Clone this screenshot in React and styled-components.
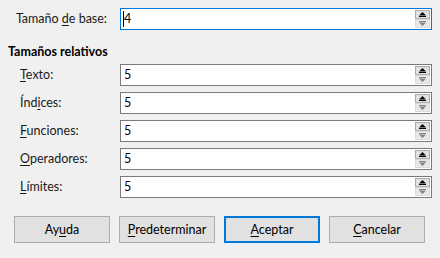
import React from "react";
import styled, { createGlobalStyle } from "styled-components";

const Global = createGlobalStyle`
  html, body { margin: 0; padding: 0; background: #f0f0f0; }
  body { font-family: Lato, "Noto Sans", sans-serif; font-size: 12.5px; color: #000; }
  u { text-decoration: underline; text-underline-offset: 2px; }
`;

const Dialog = styled.div`
  width: 440px;
  height: 258px;
  box-sizing: border-box;
  padding: 8px 8px 0 8px;
  display: flex;
  flex-direction: column;
`;

const Row = styled.div`
  display: grid;
  grid-template-columns: 112px 312px;
  align-items: center;
  height: 22px;
`;

const Label = styled.label`
  text-align: ${(p) => (p.$right ? "right" : "left")};
  padding-right: ${(p) => (p.$right ? 13 : 0)}px;
  padding-left: ${(p) => (p.$right ? 0 : 12)}px;
  white-space: nowrap;
  line-height: 16px;
  color: #1a1a1a;
`;

const Heading = styled.div`
  font-weight: bold;
  line-height: 16px;
  margin-top: 14px;
  margin-bottom: 4px;
`;

const Field = styled.div`
  box-sizing: border-box;
  height: 22px;
  background: #fff;
  border: 1px solid ${(p) => (p.$focus ? "#0078d7" : "#7a7a7a")};
  display: flex;
  align-items: center;
  padding: 1px 1px 1px 3px;
`;

const Value = styled.span`
  flex: 1;
  line-height: 16px;
  position: relative;
`;

const Caret = styled.span`
  position: absolute;
  left: -1px;
  top: 0;
  width: 1px;
  height: 16px;
  background: #000;
`;

const Spin = styled.div`
  display: flex;
  flex-direction: column;
  width: 15px;
  height: 18px;
`;

const SpinBtn = styled.div`
  box-sizing: border-box;
  height: 9px;
  border: 1px solid ${(p) => (p.$dim ? "#dcdcdc" : "#adadad")};
  background: ${(p) => (p.$dim ? "#e8e8e8" : "#e1e1e1")};
  display: flex;
  align-items: center;
  justify-content: center;
`;

const Rel = styled.div`
  display: flex;
  flex-direction: column;
  gap: 6px;
`;

const Buttons = styled.div`
  display: flex;
  gap: 9px;
  padding-left: 6px;
  margin-top: 18px;
`;

const Button = styled.button`
  box-sizing: border-box;
  width: 96px;
  height: 27px;
  font-family: inherit;
  font-size: 12.5px;
  color: #000;
  background: #e1e1e1;
  border: ${(p) => (p.$def ? "2px solid #0078d7" : "1px solid #adadad")};
  padding: 0;
`;

const Up = () => (
  <svg width="9" height="5" viewBox="0 0 9 5">
    <path d="M4.5 0 L8 3.5 L1 3.5 Z" fill="#000" />
    <rect x="1" y="4" width="7" height="1" fill="#000" />
  </svg>
);
const Down = () => (
  <svg width="9" height="5" viewBox="0 0 9 5">
    <rect x="1" y="0" width="7" height="1" fill="#838383" />
    <path d="M1 1.5 L8 1.5 L4.5 5 Z" fill="#838383" />
  </svg>
);

const SpinField = ({ value, focus }) => (
  <Field $focus={focus}>
    <Value>
      {focus && <Caret />}
      {value}
    </Value>
    <Spin>
      <SpinBtn>
        <Up />
      </SpinBtn>
      <SpinBtn $dim>
        <Down />
      </SpinBtn>
    </Spin>
  </Field>
);

const rows = [
  <><u>T</u>exto:</>,
  <>Índ<u>i</u>ces:</>,
  <><u>F</u>unciones:</>,
  <><u>O</u>peradores:</>,
  <><u>L</u>ímites:</>,
];

export default function App() {
  return (
    <>
      <Global />
      <Dialog>
        <Row>
          <Label $right>
            Tamaño <u>d</u>e base:
          </Label>
          <SpinField value="4" focus />
        </Row>
        <Heading>Tamaños relativos</Heading>
        <Rel>
          {rows.map((r, i) => (
            <Row key={i}>
              <Label>{r}</Label>
              <SpinField value="5" />
            </Row>
          ))}
        </Rel>
        <Buttons>
          <Button>
            Ay<u>u</u>da
          </Button>
          <Button>
            <u>P</u>redeterminar
          </Button>
          <Button $def>
            <u>A</u>ceptar
          </Button>
          <Button>
            <u>C</u>ancelar
          </Button>
        </Buttons>
      </Dialog>
    </>
  );
}
